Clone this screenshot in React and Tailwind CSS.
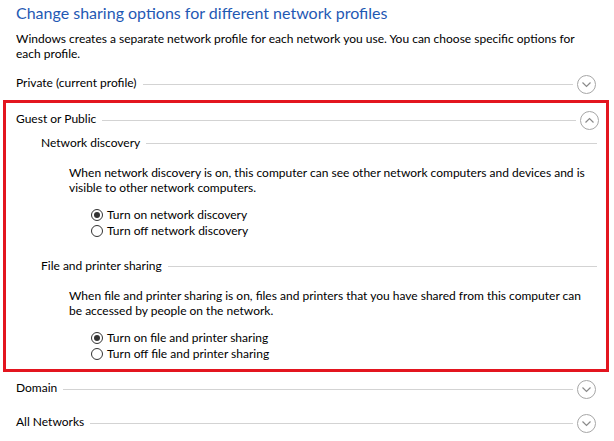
import React from 'react';

const Chevron = ({ up }) => (
    <svg width="19" height="19" viewBox="0 0 19 19" className="shrink-0 ml-[4px]">
        <circle cx="9.5" cy="9.5" r="9" fill="white" stroke="#a6a6a6" strokeWidth="1" />
        {up
            ? <path d="M5.5 11.5 L9.5 7.5 L13.5 11.5" fill="none" stroke="#8a8a8a" strokeWidth="1.2" />
            : <path d="M5.5 7.5 L9.5 11.5 L13.5 7.5" fill="none" stroke="#8a8a8a" strokeWidth="1.2" />}
    </svg>
);

const Header = ({ label, up, className }) => (
    <div className={'flex items-center h-[19px] ' + className}>
        <span className="whitespace-nowrap -translate-y-[2px]">{label}</span>
        <div className="flex-1 h-px bg-[#d3d3d3] ml-[6px]" />
        <Chevron up={up} />
    </div>
);

const SubHeader = ({ label, className }) => (
    <div className={'flex items-center h-[16px] ' + className}>
        <span className="whitespace-nowrap -translate-y-px">{label}</span>
        <div className="flex-1 h-px bg-[#d3d3d3] ml-[6px]" />
    </div>
);

const Radio = ({ checked, label }) => (
    <div className="flex items-center h-[16px]">
        <span className="w-[12px] h-[12px] rounded-full border border-[#333] bg-white flex items-center justify-center mr-[4px]">
            {checked && <span className="w-[6px] h-[6px] rounded-full bg-[#333]" />}
        </span>
        <span className="whitespace-nowrap -translate-y-px">{label}</span>
    </div>
);

export default function App() {
    return (
        <div className="w-[614px] h-[441px] bg-white overflow-hidden text-black text-[12px] leading-[15px] font-['Lato','Noto_Sans',sans-serif]">

            <div className="pl-[16px] pr-[18px]">
                <h1 className="pt-[2px] text-[16px] leading-[22px] text-[#1f59b4] whitespace-nowrap">Change sharing options for different network profiles</h1>
                <p className="mt-[7px] whitespace-nowrap">
                    Windows creates a separate network profile for each network you use. You can choose specific options for
                    <br />
                    each profile.
                </p>
                <Header label="Private (current profile)" className="mt-[14px]" />
            </div>

            <div className="mt-[6px] ml-[3px] w-[606px] border-[3px] border-[#e3151f] pl-[10px] pr-[7px] pt-[8px] pb-[7px]">
                <Header label="Guest or Public" up />

                <div className="pl-[25px] pr-[2px]">
                    <SubHeader label="Network discovery" className="mt-[5px]" />
                    <p className="pl-[28px] mt-[14px] whitespace-nowrap">
                        When network discovery is on, this computer can see other network computers and devices and is
                        <br />
                        visible to other network computers.
                    </p>
                    <div className="pl-[50px] mt-[12px]">
                        <Radio checked label="Turn on network discovery" />
                        <Radio label="Turn off network discovery" />
                    </div>

                    <SubHeader label="File and printer sharing" className="mt-[19px]" />
                    <p className="pl-[28px] mt-[14px] whitespace-nowrap">
                        When file and printer sharing is on, files and printers that you have shared from this computer can
                        <br />
                        be accessed by people on the network.
                    </p>
                    <div className="pl-[50px] mt-[12px]">
                        <Radio checked label="Turn on file and printer sharing" />
                        <Radio label="Turn off file and printer sharing" />
                    </div>
                </div>
            </div>

            <div className="pl-[16px] pr-[18px]">
                <Header label="Domain" className="mt-[8px]" />
                <Header label="All Networks" className="mt-[15px]" />
            </div>
        </div>
    );
}
